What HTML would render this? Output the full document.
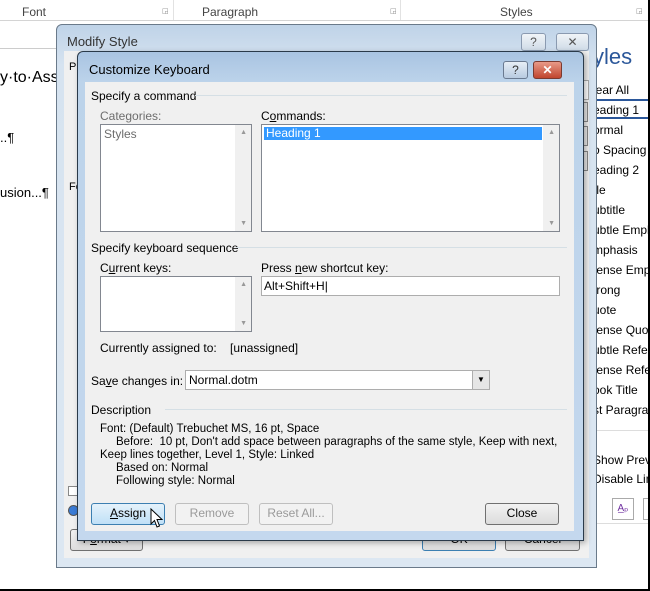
<!DOCTYPE html>
<html><head><meta charset="utf-8"><style>
*{box-sizing:border-box;margin:0;padding:0}
body{width:650px;height:591px;overflow:hidden;background:#fff;font-family:"Liberation Sans",sans-serif;font-size:12px;color:#000;position:relative;white-space:nowrap}
.a{position:absolute}
.frame{left:0;top:0;width:650px;height:591px;border:2px solid #000;border-top:none;border-left:none}
.rib{left:0;top:0;width:650px;height:21px;background:#fff;border-bottom:1px solid #d4d4d4;color:#444;font-size:12px}
.btn{position:absolute;border:1px solid #707070;border-radius:3px;background:linear-gradient(#f2f2f2,#dcdcdc);text-align:center;font-size:12px;line-height:19px}
.lst{position:absolute;background:#fff;border:1px solid #828790}
.sb{position:absolute;right:0;top:0;bottom:0;width:16px;background:#f0f0f0}
.grp{position:absolute;height:1px;background:#d5dfe5}
.sty{position:absolute;left:593px;font-size:12px}
.pane{position:absolute;left:0;top:0;width:650px;height:591px;overflow:hidden}
</style></head><body>
<div class="a rib">
<span class="a" style="left:22px;top:5px">Font</span>
<span class="a" style="left:202px;top:5px">Paragraph</span>
<span class="a" style="left:500px;top:5px">Styles</span>
<span class="a" style="left:162px;top:7px;font-size:7px;color:#888">◲</span>
<span class="a" style="left:390px;top:7px;font-size:7px;color:#888">◲</span>
<span class="a" style="left:636px;top:7px;font-size:7px;color:#888">◲</span>
<div class="a" style="left:173px;top:0;width:1px;height:20px;background:#e2e2e2"></div>
<div class="a" style="left:400px;top:0;width:1px;height:20px;background:#e2e2e2"></div>
</div>
<div class="a" style="left:0;top:48px;width:56px;height:1px;background:#ccc"></div>
<div class="a" style="left:0;top:69px;font-size:16px">y·to·Ass</div>
<div class="a" style="left:0;top:130px;font-size:13px">..¶</div>
<div class="a" style="left:0;top:185px;font-size:13px">usion...¶</div>

<div class="pane">
<div class="a" style="left:593px;top:44px;font-size:22px;color:#2b579a">yles</div>
<div class="a" style="left:585px;top:99px;width:70px;height:20px;border:2px solid #2b579a;border-left:none"></div>
<div class="sty" style="top:83px">lear All</div>
<div class="sty" style="top:103px">eading 1</div>
<div class="sty" style="top:123px">ormal</div>
<div class="sty" style="top:143px">o Spacing</div>
<div class="sty" style="top:163px">eading 2</div>
<div class="sty" style="top:183px">tle</div>
<div class="sty" style="top:203px">ubtitle</div>
<div class="sty" style="top:223px">ubtle Emph</div>
<div class="sty" style="top:243px">mphasis</div>
<div class="sty" style="top:263px">tense Emp</div>
<div class="sty" style="top:283px">trong</div>
<div class="sty" style="top:303px">uote</div>
<div class="sty" style="top:323px">tense Quo</div>
<div class="sty" style="top:343px">ubtle Refer</div>
<div class="sty" style="top:363px">tense Refe</div>
<div class="sty" style="top:383px">ook Title</div>
<div class="sty" style="top:403px">st Paragrap</div>
<div class="a" style="left:593px;top:430px;width:57px;height:1px;background:#ddd"></div>
<div class="sty" style="top:453px">Show Previ</div>
<div class="sty" style="top:472px">Disable Lin</div>
<div class="a" style="left:612px;top:498px;width:22px;height:22px;border:1px solid #aaa;color:#7030a0;font-size:10px;text-align:center;line-height:20px">A̲ₚ</div>
<div class="a" style="left:643px;top:498px;width:10px;height:22px;border:1px solid #aaa"></div>
<div class="a" style="left:593px;top:523px;width:57px;height:1px;background:#ddd"></div>
</div>

<!-- Modify Style -->
<div class="a" style="left:56px;top:24px;width:541px;height:544px;border:1px solid #6a7a8a;border-radius:6px 6px 0 0;background:linear-gradient(#bfd3e8,#d6e3f0 40px,#dce7f2)"></div>
<div class="a" style="left:67px;top:34px;font-size:13px;color:#333">Modify Style</div>
<div class="a" style="left:521px;top:33px;width:25px;height:18px;border:1px solid #8a9ab0;border-radius:3px;background:linear-gradient(#f0f4f8,#d0dce8);text-align:center;color:#555;line-height:16px">?</div>
<div class="a" style="left:556px;top:33px;width:33px;height:18px;border:1px solid #8a9ab0;border-radius:3px;background:linear-gradient(#f0f4f8,#d0dce8);text-align:center;color:#555;line-height:16px">✕</div>
<div class="a" style="left:64px;top:51px;width:525px;height:507px;background:#f0f0f0"></div>
<div class="a" style="left:69px;top:61px;font-size:11px">P</div>
<div class="a" style="left:69px;top:181px;font-size:11px">Fo</div>
<div class="a" style="left:580px;top:80px;width:9px;height:20px;background:#fff;border:1px solid #aaa"></div>
<div class="a" style="left:578px;top:102px;width:10px;height:20px;background:#e8e8e8;border:1px solid #888"></div>
<div class="a" style="left:578px;top:126px;width:10px;height:20px;background:#e8e8e8;border:1px solid #888"></div>
<div class="a" style="left:578px;top:151px;width:10px;height:20px;background:#e8e8e8;border:1px solid #888"></div>
<div class="a" style="left:572px;top:262px;width:12px;height:150px;background:#fff;border:1px solid #888"></div>
<div class="a" style="left:570px;top:417px;width:12px;height:60px;border:1px solid #ccc"></div>
<div class="a" style="left:68px;top:486px;width:10px;height:10px;border:1px solid #888;background:#fff"></div>
<div class="a" style="left:68px;top:505px;width:11px;height:11px;border-radius:50%;border:1px solid #555;background:#3a7bd5"></div>
<div class="btn" style="left:70px;top:529px;width:73px;height:22px">F<u>o</u>rmat ▾</div>
<div class="btn" style="left:422px;top:529px;width:74px;height:22px;border-color:#3c7fb1">OK</div>
<div class="btn" style="left:505px;top:529px;width:75px;height:22px">Cancel</div>

<!-- Customize Keyboard -->
<div class="a" style="left:77px;top:51px;width:507px;height:490px;border:1px solid #2a3a4a;border-radius:6px 6px 0 0;background:linear-gradient(#a9c4e2,#bcd3ea 30px,#c4d8ee);box-shadow:2px 2px 6px rgba(0,0,0,.3)"></div>
<div class="a" style="left:89px;top:62px;font-size:13px;color:#000">Customize Keyboard</div>
<div class="a" style="left:503px;top:61px;width:25px;height:18px;border:1px solid #6a7a90;border-radius:3px;background:linear-gradient(#e6eef6,#b8cbe0);text-align:center;color:#333;line-height:16px">?</div>
<div class="a" style="left:533px;top:61px;width:29px;height:18px;border:1px solid #7a3a30;border-radius:3px;background:linear-gradient(#e89a88,#c0452e);text-align:center;color:#fff;line-height:16px;font-weight:bold">✕</div>
<div class="a" style="left:85px;top:82px;width:489px;height:449px;background:#f0f0f0"></div>

<div class="a" style="left:91px;top:89px">Specify a command</div>
<div class="grp" style="left:195px;top:95px;width:372px"></div>
<div class="a" style="left:100px;top:109px;color:#6d6d6d">Categories:</div>
<div class="a" style="left:261px;top:109px">C<u>o</u>mmands:</div>
<div class="lst" style="left:100px;top:124px;width:152px;height:108px"><div class="sb"></div><span class="a" style="left:3px;top:2px;color:#6d6d6d">Styles</span><span class="a" style="right:4px;top:4px;font-size:7px;color:#999">▲</span><span class="a" style="right:4px;bottom:4px;font-size:7px;color:#999">▼</span></div>
<div class="lst" style="left:261px;top:124px;width:299px;height:108px"><div class="sb"></div><div class="a" style="left:2px;top:2px;width:278px;height:13px;background:#3399ff;color:#fff;padding-left:2px;line-height:13px">Heading 1</div><span class="a" style="right:4px;top:4px;font-size:7px;color:#999">▲</span><span class="a" style="right:4px;bottom:4px;font-size:7px;color:#999">▼</span></div>

<div class="a" style="left:91px;top:241px">Specify keyboard sequence</div>
<div class="grp" style="left:236px;top:247px;width:331px"></div>
<div class="a" style="left:100px;top:261px">C<u>u</u>rrent keys:</div>
<div class="a" style="left:261px;top:261px">Press <u>n</u>ew shortcut key:</div>
<div class="lst" style="left:100px;top:276px;width:152px;height:56px"><div class="sb"></div><span class="a" style="right:4px;top:4px;font-size:7px;color:#999">▲</span><span class="a" style="right:4px;bottom:4px;font-size:7px;color:#999">▼</span></div>
<div class="lst" style="left:261px;top:276px;width:299px;height:20px;border-color:#adadad"><span class="a" style="left:2px;top:2px">Alt+Shift+H|</span></div>
<div class="a" style="left:100px;top:341px">Currently assigned to:&nbsp;&nbsp;&nbsp; [unassigned]</div>
<div class="a" style="left:91px;top:374px">Sa<u>v</u>e changes in:</div>
<div class="lst" style="left:185px;top:370px;width:305px;height:20px;border-color:#adadad"><span class="a" style="left:3px;top:2px">Normal.dotm</span><div class="a" style="right:0;top:0;width:17px;height:18px;border-left:1px solid #adadad;background:#e6e6e6;font-size:8px;text-align:center;line-height:18px">▼</div></div>

<div class="a" style="left:91px;top:403px">Description</div>
<div class="grp" style="left:165px;top:409px;width:402px"></div>
<div class="a" style="left:100px;top:423px;line-height:13px;font-size:11.5px">Font: (Default) Trebuchet MS, 16 pt, Space<br>&nbsp;&nbsp;&nbsp;&nbsp;&nbsp;Before:&nbsp; 10 pt, Don't add space between paragraphs of the same style, Keep with next,<br>Keep lines together, Level 1, Style: Linked<br>&nbsp;&nbsp;&nbsp;&nbsp;&nbsp;Based on: Normal<br>&nbsp;&nbsp;&nbsp;&nbsp;&nbsp;Following style: Normal</div>

<div class="btn" style="left:91px;top:503px;width:74px;height:22px;border-color:#3c7fb1;background:linear-gradient(#e5f2fb,#bfe0f7)"><u>A</u>ssign</div>
<div class="btn" style="left:175px;top:503px;width:74px;height:22px;border-color:#bfbfbf;color:#9a9a9a;background:#f2f2f2">Remove</div>
<div class="btn" style="left:259px;top:503px;width:74px;height:22px;border-color:#bfbfbf;color:#9a9a9a;background:#f2f2f2">Reset All...</div>
<div class="btn" style="left:485px;top:503px;width:74px;height:22px">Close</div>
<svg class="a" style="left:150px;top:508px" width="14" height="22" viewBox="0 0 14 22"><path d="M1 1 L1 16 L4.5 12.5 L7 19 L9.5 18 L7 11.5 L12 11.5 Z" fill="#fff" stroke="#000" stroke-width="1"/></svg>
<div class="a frame"></div>
</body></html>
